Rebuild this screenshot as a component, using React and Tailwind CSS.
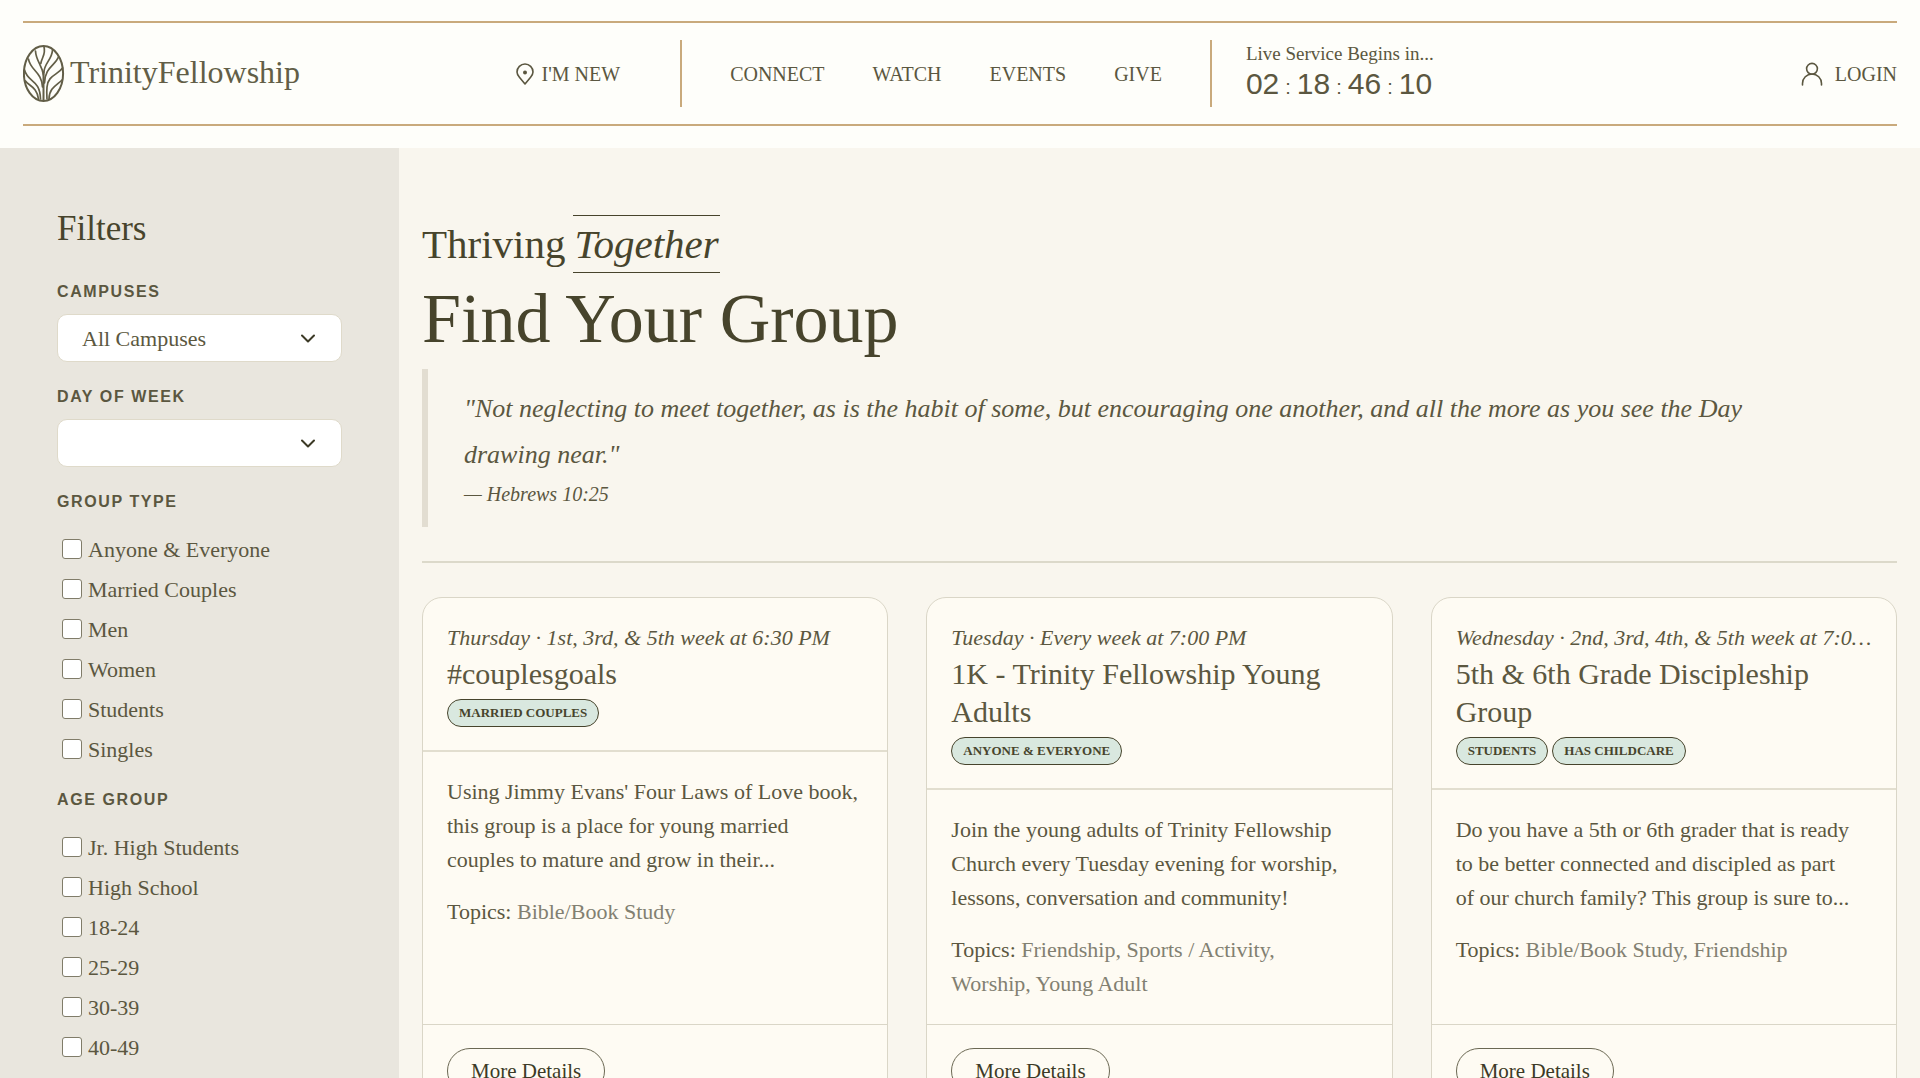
import React from 'react';

const navLinks = ['CONNECT', 'WATCH', 'EVENTS', 'GIVE'];

const groupTypes = ['Anyone & Everyone', 'Married Couples', 'Men', 'Women', 'Students', 'Singles'];
const ageGroups = ['Jr. High Students', 'High School', '18-24', '25-29', '30-39', '40-49'];

const groups = [
  {
    when: 'Thursday · 1st, 3rd, & 5th week at 6:30 PM',
    title: '#couplesgoals',
    tags: ['MARRIED COUPLES'],
    text: "Using Jimmy Evans' Four Laws of Love book,\nthis group is a place for young married\ncouples to mature and grow in their...",
    topics: 'Bible/Book Study',
  },
  {
    when: 'Tuesday · Every week at 7:00 PM',
    title: '1K - Trinity Fellowship Young Adults',
    tags: ['ANYONE & EVERYONE'],
    text: 'Join the young adults of Trinity Fellowship\nChurch every Tuesday evening for worship,\nlessons, conversation and community!',
    topics: 'Friendship, Sports / Activity,\nWorship, Young Adult',
  },
  {
    when: 'Wednesday · 2nd, 3rd, 4th, & 5th week at 7:00 PM',
    title: '5th & 6th Grade Discipleship Group',
    tags: ['STUDENTS', 'HAS CHILDCARE'],
    text: 'Do you have a 5th or 6th grader that is ready\nto be better connected and discipled as part\nof our church family? This group is sure to...',
    topics: 'Bible/Book Study, Friendship',
  },
];

function TreeMark() {
  return (
    <svg viewBox="0 0 42 58" className="h-[58px] w-[42px]" fill="none" stroke="currentColor" strokeWidth="1.700" strokeLinecap="round" aria-hidden="true">
      <ellipse cx="20.500" cy="28.500" rx="19.600" ry="27.400" strokeWidth="2" />
      <path d="M20.500 55V27" strokeWidth="2" />
      <path d="M12.500 6C13 16 19 20 20.500 30" />
      <path d="M21 2C23 9 19 12 17.800 18.500" />
      <path d="M29.500 5C29 15 21 18 20.800 28" />
      <path d="M5.500 14C7 25 19 27 19.500 42" />
      <path d="M35.500 12C32 21 22 22 21.500 38" />
      <path d="M1.500 25C5 38 17 34 17.500 54" />
      <path d="M39.500 23C35 30 25 30 24 42C23.500 47 23.800 51 24 54" />
      <path d="M2.500 36C6 41 14 42 15.500 54" />
      <path d="M39 35C34 40 26 43 26 54" />
    </svg>
  );
}

function PinIcon() {
  return (
    <svg viewBox="0 0 18 22" className="h-[22px] w-[18px]" fill="none" stroke="currentColor" strokeWidth="1.6" strokeLinejoin="round" aria-hidden="true">
      <path d="M9 21L3.4 14.2C1.8 12.3 1 10.8 1 9a8 8 0 0 1 16 0c0 1.800-.8 3.300-2.400 5.200Z" />
      <circle cx="9" cy="9.500" r="2" fill="currentColor" stroke="none" />
    </svg>
  );
}

function UserIcon() {
  return (
    <svg viewBox="0 0 22 24" className="h-6 w-[22px]" fill="none" stroke="currentColor" strokeWidth="1.6" strokeLinecap="round" aria-hidden="true">
      <circle cx="11" cy="6.800" r="5.400" />
      <path d="M1.500 23v-1.500a9.500 9.500 0 0 1 19 0V23" />
    </svg>
  );
}

function Countdown() {
  const parts = ['02', '18', '46', '10'];
  return (
    <div className="pb-[3px]">
      <p className="text-[19px] leading-6">Live Service Begins in...</p>
      <p className="flex items-baseline gap-[6px] font-['Liberation_Sans',sans-serif] text-[30px] leading-9">
        {parts.map((p, i) => (
          <React.Fragment key={p}>
            {i > 0 && <span className="text-xl leading-6">:</span>}
            <span>{p}</span>
          </React.Fragment>
        ))}
      </p>
    </div>
  );
}

function Header() {
  return (
    <header className="bg-[#fefefa] px-[23px] pt-[21px] pb-[22px]">
      <div className="flex h-[105px] items-center border-y-2 border-[#c9aa7c]">
        <a href="#home" className="flex items-center gap-[5px] text-[#625e47]">
          <TreeMark />
          <span className="pb-1 text-[32px] leading-10">TrinityFellowship</span>
        </a>
        <div className="grow-[37]" />
        <a href="#new" className="flex items-center gap-2 text-xl">
          <PinIcon />
          I'M NEW
        </a>
        <div className="ml-[60px] h-[67px] border-l-2 border-[#c9aa7c]" />
        <nav className="flex gap-12 px-12 text-xl">
          {navLinks.map((l) => (
            <a key={l} href={'#' + l.toLowerCase()}>{l}</a>
          ))}
        </nav>
        <div className="mr-[34px] h-[67px] border-l-2 border-[#c9aa7c]" />
        <Countdown />
        <div className="grow-[63]" />
        <a href="#login" className="flex items-center gap-3 text-xl">
          <UserIcon />
          LOGIN
        </a>
      </div>
    </header>
  );
}

const filterLabel = "block font-['Liberation_Sans',sans-serif] text-base leading-6 font-bold tracking-widest";

function SelectFilter({ id, label, options }) {
  return (
    <div className="pb-1">
      <label htmlFor={id} className={filterLabel}>{label}</label>
      <div className="relative mt-[10px]">
        <select id={id} className="h-12 w-full appearance-none rounded-[10px] border border-[#dfdaca] bg-white pl-6 text-[22px]">
          {options.map((o) => (
            <option key={o}>{o}</option>
          ))}
        </select>
        <svg viewBox="0 0 14 9" className="pointer-events-none absolute top-5 right-[27px] h-[9px] w-[14px] text-[#3c3a26]" fill="none" stroke="currentColor" strokeWidth="2" strokeLinecap="round" strokeLinejoin="round" aria-hidden="true">
          <path d="M1 1.500l6 6 6-6" />
        </svg>
      </div>
    </div>
  );
}

function CheckFilter({ label, options }) {
  return (
    <fieldset>
      <legend className={filterLabel}>{label}</legend>
      <div className="pt-[15px] pl-[5px]">
        {options.map((o) => (
          <label key={o} className="flex h-10 items-center gap-[6px] text-[22px]">
            <input type="checkbox" className="size-5 appearance-none rounded-[3px] border border-[#807c69] bg-white checked:bg-[#5b5740]" />
            {o}
          </label>
        ))}
      </div>
    </fieldset>
  );
}

function Sidebar() {
  return (
    <aside className="w-[399px] shrink-0 bg-[#e9e6de] px-[57px] pt-[61px]">
      <h2 className="text-[35px] leading-10 text-[#47442c]">Filters</h2>
      <form className="mt-[31px] flex flex-col gap-[19px]">
        <SelectFilter id="campus" label="CAMPUSES" options={['All Campuses']} />
        <SelectFilter id="day" label="DAY OF WEEK" options={['']} />
        <CheckFilter label="GROUP TYPE" options={groupTypes} />
        <CheckFilter label="AGE GROUP" options={ageGroups} />
      </form>
    </aside>
  );
}

function GroupCard({ group }) {
  return (
    <article className="flex min-w-0 flex-col rounded-[20px] border border-[#dad6c7] bg-[#fefbf3]">
      <div className="border-b-2 border-[#e2decf] px-6 pt-[23px] pb-[23px]">
        <p className="truncate text-[22px] leading-[34px] italic">{group.when}</p>
        <h3 className="text-[30px] leading-[38px]">{group.title}</h3>
        <div className="mt-[6px] flex gap-1">
          {group.tags.map((t) => (
            <span key={t} className="rounded-full border border-[#47442c] bg-[#d9e8df] px-[11px] text-[13px] leading-[26px] font-bold text-[#47442c]">{t}</span>
          ))}
        </div>
      </div>
      <div className="grow px-6 pt-[23px] pb-[23px] text-[22px] leading-[34px] whitespace-pre-line">
        <p>{group.text}</p>
        <p className="mt-[18px] text-[#828071]">
          <span className="text-[#5b5740]">Topics:</span> {group.topics}
        </p>
      </div>
      <div className="border-t border-[#dad6c7] px-6 py-[23px]">
        <button type="button" className="rounded-full border border-[#6b6853] px-[23px] text-[21px] leading-[44px] text-[#3c3a26]">More Details</button>
      </div>
    </article>
  );
}

export default function App() {
  return (
    <div className="flex h-screen flex-col overflow-hidden bg-[#f9f6ee] font-['Liberation_Serif',serif] text-[#5b5740]">
      <Header />
      <div className="flex grow">
        <Sidebar />
        <main className="min-w-0 grow px-[23px] pt-[67px]">
          <p className="flex items-center gap-2 text-[41px] leading-[56px] text-[#47442c]">
            Thriving
            <em className="border-y border-[#47442c] px-[1px]">Together</em>
          </p>
          <h1 className="mt-[6px] text-[70px] leading-[80px] text-[#47442c]">Find Your Group</h1>
          <blockquote className="mt-[10px] border-l-[6px] border-[#e2ddd1] py-[17px] pr-[120px] pl-9 italic">
            <p className="text-[26px] leading-[46px]">
              "Not neglecting to meet together, as is the habit of some, but encouraging one another, and all the more as you see the Day drawing near."
            </p>
            <cite className="block text-xl leading-8">— Hebrews 10:25</cite>
          </blockquote>
          <hr className="mt-[34px] border-t-2 border-[#dcd9ca]" />
          <section className="mt-[34px] grid grid-cols-3 gap-[38px]">
            {groups.map((g) => (
              <GroupCard key={g.title} group={g} />
            ))}
          </section>
        </main>
      </div>
    </div>
  );
}
